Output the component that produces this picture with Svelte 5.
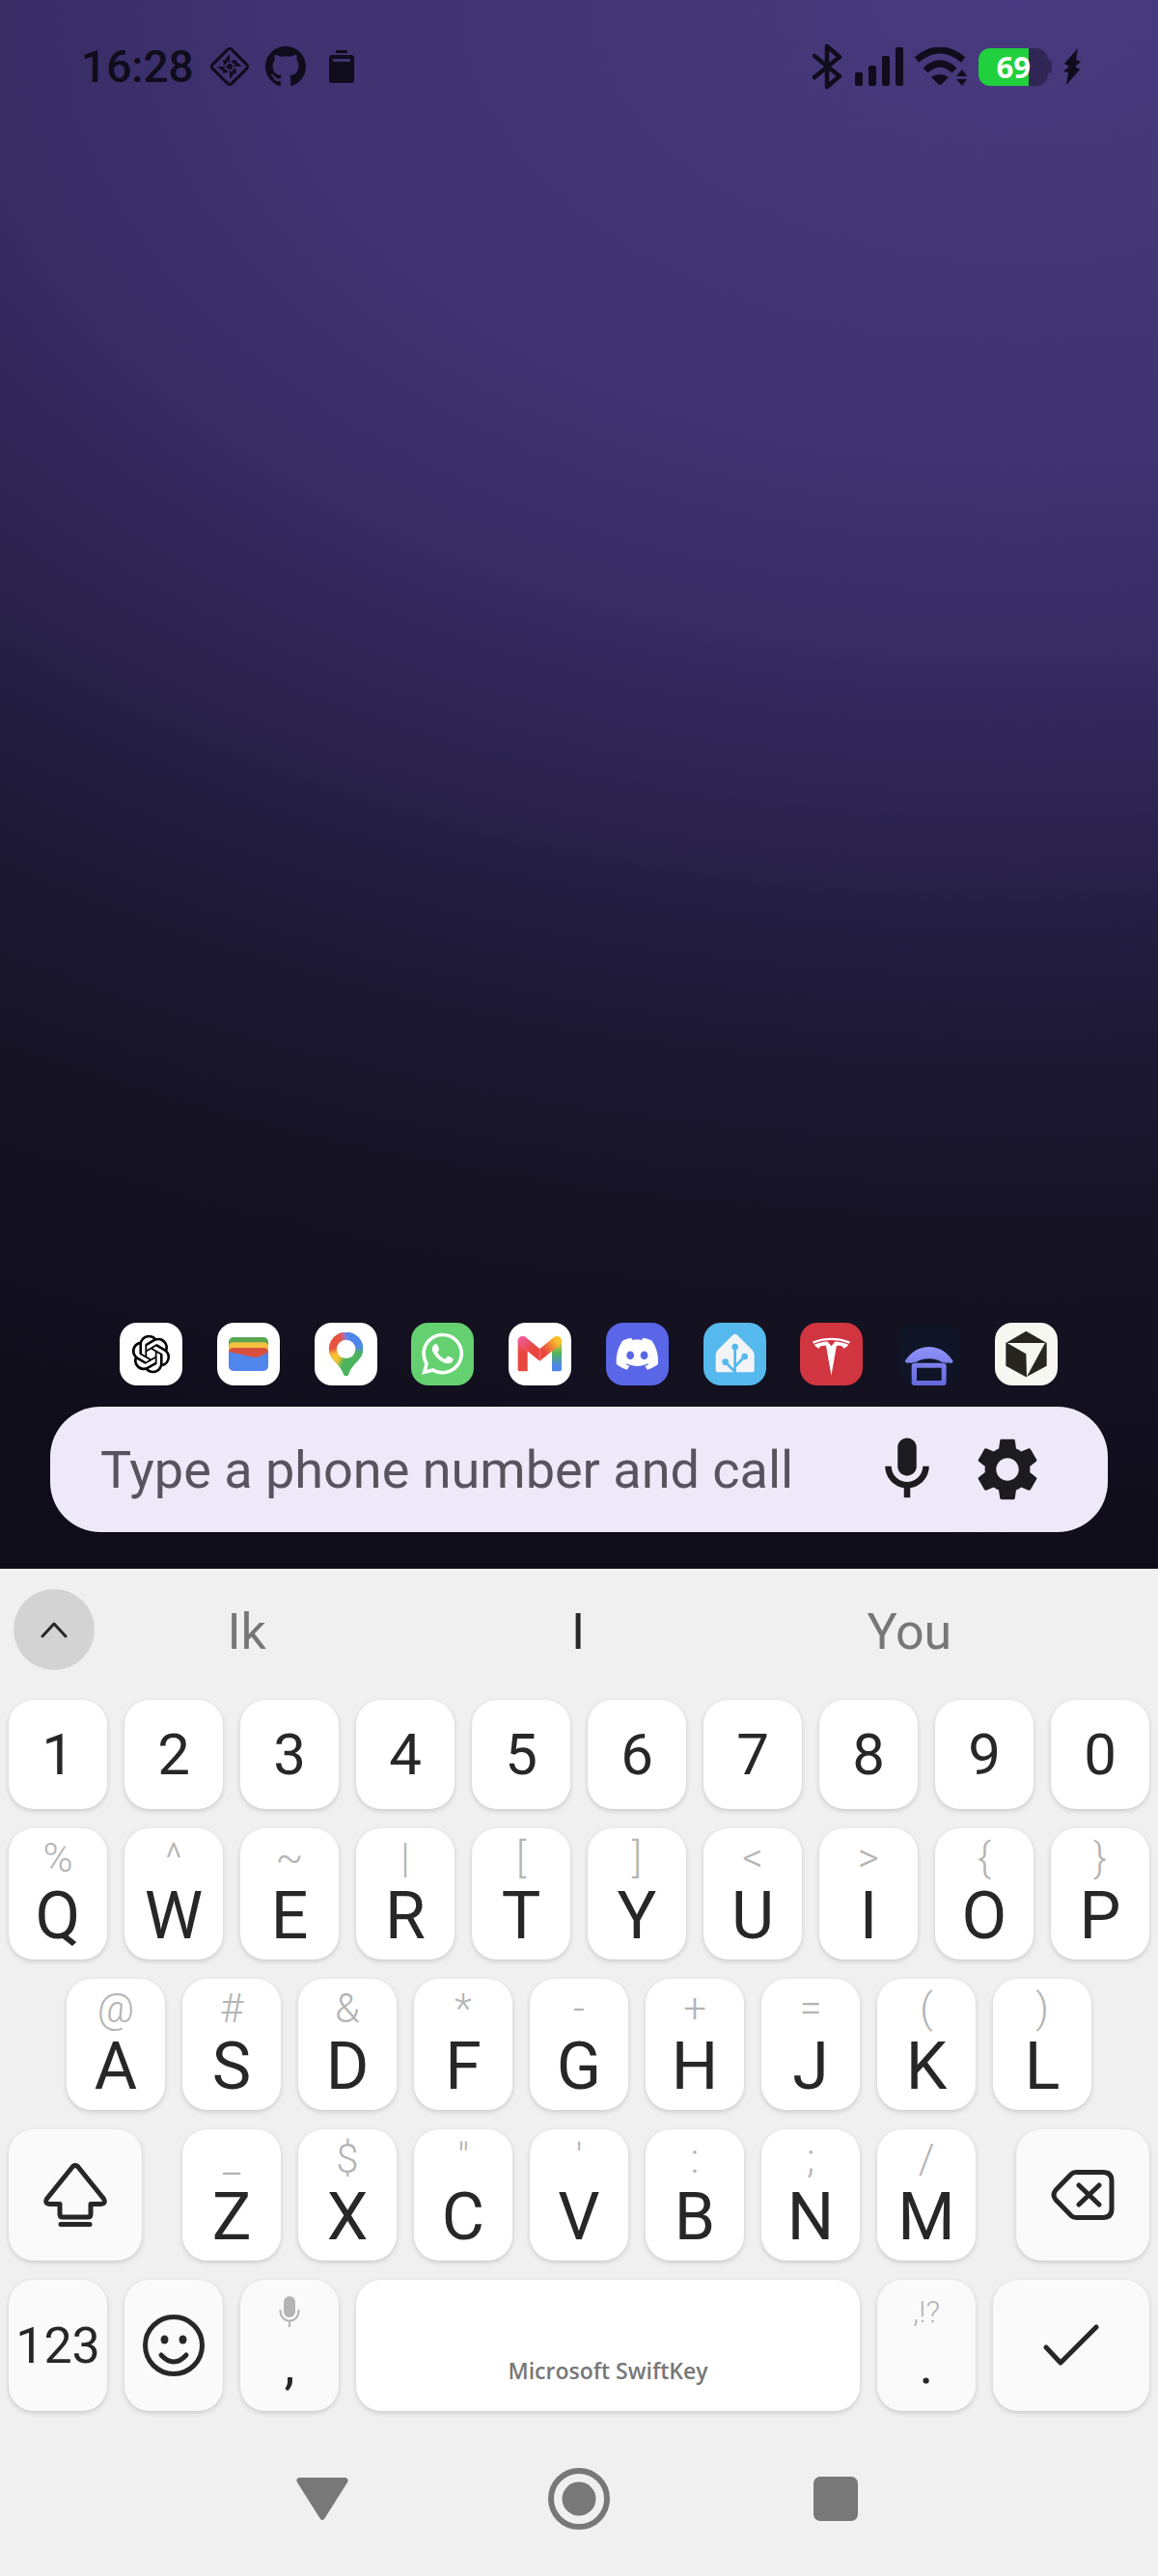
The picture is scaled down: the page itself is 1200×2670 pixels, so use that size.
<script lang="ts">
  type Key = { label: string; hint: string };

  const digits = '1234567890'.split('');

  function makeRow(letters: string, hints: string): Key[] {
    return letters.split('').map((label, i) => ({ label, hint: hints[i] }));
  }

  const topRow = makeRow('QWERTYUIOP', '%^~|[]<>{}');
  const homeRow = makeRow('ASDFGHJKL', '@#&*-+=()');
  const bottomRow = makeRow('ZXCVBNM', '_$"\':;/');

  const suggestions = ['Ik', 'I', 'You'];

  let query = $state('');

  function type(text: string) {
    query += text;
  }

  function backspace() {
    query = query.slice(0, -1);
  }
</script>

{#snippet letterKey(key: Key)}
  <button class="key" type="button" onclick={() => type(key.label)}>
    <span class="hint">{key.hint}</span>
    <span class="letter">{key.label}</span>
  </button>
{/snippet}

<div class="phone">
  <main class="home">
    <header class="status">
      <div class="status-left">
        <span class="time">16:28</span>
        <svg width="42" height="42" viewBox="0 0 42 42" aria-hidden="true">
          <rect x="7" y="7" width="28" height="28" rx="3" transform="rotate(45 21 21)" fill="none" stroke="currentColor" stroke-width="3" />
          <path d="M21 8l-5 6 5 3zM21 34l5-6-5-3zM8 21l6 5 3-5zM34 21l-6-5-3 5zM14 14l6 1-5 5zM28 28l-6-1 5-5zM28 14l-1 6-5-5zM14 28l1-6 5 5z" fill="currentColor" />
          <circle cx="21" cy="21" r="3" fill="currentColor" />
        </svg>
        <svg width="42" height="42" viewBox="0 0 16 16" aria-hidden="true">
          <path fill="currentColor" d="M8 0C3.58 0 0 3.58 0 8c0 3.54 2.29 6.53 5.47 7.59.4.07.55-.17.55-.38 0-.19-.01-.82-.01-1.49-2.01.37-2.53-.49-2.69-.94-.09-.23-.48-.94-.82-1.13-.28-.15-.68-.52-.01-.53.63-.01 1.08.58 1.23.82.72 1.21 1.87.87 2.33.66.07-.52.28-.87.51-1.07-1.78-.2-3.64-.89-3.64-3.95 0-.87.31-1.59.82-2.15-.08-.2-.36-1.02.08-2.12 0 0 .67-.21 2.2.82.64-.18 1.32-.27 2-.27.68 0 1.36.09 2 .27 1.53-1.04 2.2-.82 2.2-.82.44 1.1.16 1.92.08 2.12.51.56.82 1.27.82 2.15 0 3.07-1.87 3.75-3.65 3.95.29.25.54.73.54 1.48 0 1.07-.01 1.93-.01 2.2 0 .21.15.46.55.38A8.013 8.013 0 0016 8c0-4.42-3.58-8-8-8z" />
        </svg>
        <svg width="42" height="42" viewBox="0 0 42 42" aria-hidden="true">
          <rect x="15" y="4" width="12" height="3" rx="1" fill="currentColor" />
          <path fill="currentColor" fill-rule="evenodd" d="M11 9h20a3 3 0 0 1 3 3v23a3 3 0 0 1-3 3H11a3 3 0 0 1-3-3V12a3 3 0 0 1 3-3zm1 4v3h18v-3z" />
        </svg>
      </div>
      <div class="status-right">
        <svg width="32" height="48" viewBox="0 0 32 48" aria-hidden="true">
          <path d="M2 13l26 21-13 11V3l13 11L2 35" fill="none" stroke="currentColor" stroke-width="4.5" stroke-linejoin="round" stroke-linecap="round" />
        </svg>
        <svg width="50" height="40" viewBox="0 0 50 40" fill="currentColor" aria-hidden="true">
          <rect x="0" y="26" width="8" height="14" rx="2" />
          <rect x="14" y="19" width="8" height="21" rx="2" />
          <rect x="28" y="9" width="8" height="31" rx="2" />
          <rect x="42" y="0" width="8" height="40" rx="2" />
        </svg>
        <svg width="54" height="40" viewBox="0 0 54 40" aria-hidden="true">
          <path d="M2 13Q26-7 50 13" fill="none" stroke="currentColor" stroke-width="7" />
          <path d="M11 24Q26 10 41 24" fill="none" stroke="currentColor" stroke-width="7" />
          <path d="M17 31q9-6 18 0l-7 7q-2 2-4 0z" fill="currentColor" />
          <path d="M49 23l5 7H43zM49 40l5-7H43z" fill="currentColor" />
        </svg>
        <div class="battery" aria-label="Battery">
          <span class="battery-body">69</span>
          <span class="battery-tip"></span>
        </div>
        <svg width="18" height="38" viewBox="0 0 18 38" aria-hidden="true">
          <path d="M15 0L1 16l5 3-6 5 5 1-2 13L17 22l-5-3 6-5-5-2z" fill="currentColor" />
        </svg>
      </div>
    </header>

    <nav class="apps" aria-label="Apps">
      <button class="app" type="button" aria-label="ChatGPT">
        <svg viewBox="0 0 195 195">
          <path transform="translate(38 38) scale(4.95)" d="M22.2819 9.8211a5.9847 5.9847 0 0 0-.5157-4.9108 6.0462 6.0462 0 0 0-6.5098-2.9A6.0651 6.0651 0 0 0 4.9807 4.1818a5.9847 5.9847 0 0 0-3.9977 2.9 6.0462 6.0462 0 0 0 .7427 7.0966 5.98 5.98 0 0 0 .511 4.9107 6.051 6.051 0 0 0 6.5146 2.9001A5.9847 5.9847 0 0 0 13.2599 24a6.0557 6.0557 0 0 0 5.7718-4.2058 5.9894 5.9894 0 0 0 3.9977-2.9001 6.0557 6.0557 0 0 0-.7475-7.0729zm-9.022 12.6081a4.4755 4.4755 0 0 1-2.8764-1.0408l.1419-.0804 4.7783-2.7582a.7948.7948 0 0 0 .3927-.6813v-6.7369l2.02 1.1686a.071.071 0 0 1 .038.052v5.5826a4.504 4.504 0 0 1-4.4945 4.4944zm-9.6607-4.1254a4.4708 4.4708 0 0 1-.5346-3.0137l.142.0852 4.783 2.7582a.7712.7712 0 0 0 .7806 0l5.8428-3.3685v2.3324a.0804.0804 0 0 1-.0332.0615L9.74 19.9502a4.4992 4.4992 0 0 1-6.1408-1.6464zM2.3408 7.8956a4.485 4.485 0 0 1 2.3655-1.9728V11.6a.7664.7664 0 0 0 .3879.6765l5.8144 3.3543-2.0201 1.1685a.0757.0757 0 0 1-.071 0l-4.8303-2.7865A4.504 4.504 0 0 1 2.3408 7.872zm16.5963 3.8558L13.1038 8.364 15.1192 7.2a.0757.0757 0 0 1 .071 0l4.8303 2.7913a4.4944 4.4944 0 0 1-.6765 8.1042v-5.6772a.79.79 0 0 0-.407-.667zm2.0107-3.0231l-.142-.0852-4.7735-2.7818a.7759.7759 0 0 0-.7854 0L9.409 9.2297V6.8974a.0662.0662 0 0 1 .0284-.0615l4.8303-2.7866a4.4992 4.4992 0 0 1 6.6802 4.66zM8.3065 12.863l-2.02-1.1638a.0804.0804 0 0 1-.038-.0567V6.0742a4.4992 4.4992 0 0 1 7.3757-3.4537l-.142.0805L8.704 5.459a.7948.7948 0 0 0-.3927.6813zm1.0976-2.3654l2.602-1.4998 2.6069 1.4998v2.9994l-2.5974 1.4997-2.6067-1.4997Z" />
        </svg>
      </button>
      <button class="app" type="button" aria-label="Wallet">
        <svg viewBox="0 0 195 195">
          <defs>
            <clipPath id="wallet"><rect x="36" y="45" width="123" height="105" rx="15" /></clipPath>
          </defs>
          <g clip-path="url(#wallet)">
            <rect x="36" y="45" width="123" height="40" fill="#5aa651" />
            <path d="M36 76q0-15 15-15h93q15 0 15 15v30H36z" fill="#f6c13e" />
            <path d="M36 92q0-14 15-14h93q15 0 15 14v30H36z" fill="#d8503d" />
            <path d="M36 90l70 16q28 6 53-17v61H36z" fill="#5085ec" />
          </g>
        </svg>
      </button>
      <button class="app" type="button" aria-label="Maps">
        <svg viewBox="0 0 195 195">
          <defs>
            <clipPath id="pin">
              <path d="M98 29a53 53 0 0 1 53 53c0 34-32 42-44 76q-2 8-9 8t-9-8C77 124 45 116 45 82a53 53 0 0 1 53-53z" />
            </clipPath>
            <filter id="soften" x="-20%" y="-20%" width="140%" height="140%"><feGaussianBlur stdDeviation="7" /></filter>
          </defs>
          <g clip-path="url(#pin)">
            <rect x="30" y="20" width="140" height="160" fill="#4bb35e" />
            <g filter="url(#soften)">
              <path d="M98 82L20 60v80l48 6z" fill="#f9c22e" />
              <path d="M98 82L20 100V10h70z" fill="#e8513f" />
              <path d="M98 82L84 0h100v88z" fill="#4f86ec" />
            </g>
          </g>
          <circle cx="98" cy="82" r="29" fill="#fff" />
        </svg>
      </button>
      <button class="app whatsapp" type="button" aria-label="WhatsApp">
        <svg viewBox="0 0 195 195">
          <path fill="#fff" transform="translate(33 32) scale(5.4)" d="M17.472 14.382c-.297-.149-1.758-.867-2.03-.967-.273-.099-.471-.148-.67.15-.197.297-.767.966-.94 1.164-.173.199-.347.223-.644.075-.297-.15-1.255-.463-2.39-1.475-.883-.788-1.48-1.761-1.653-2.059-.173-.297-.018-.458.13-.606.134-.133.298-.347.446-.52.149-.174.198-.298.298-.497.099-.198.05-.371-.025-.52-.075-.149-.669-1.612-.916-2.207-.242-.579-.487-.5-.669-.51-.173-.008-.371-.01-.57-.01-.198 0-.52.074-.792.372-.272.297-1.04 1.016-1.04 2.479 0 1.462 1.065 2.875 1.213 3.074.149.198 2.096 3.2 5.077 4.487.709.306 1.262.489 1.694.625.712.227 1.36.195 1.871.118.571-.085 1.758-.719 2.006-1.413.248-.694.248-1.289.173-1.413-.074-.124-.272-.198-.57-.347m-5.421 7.403h-.004a9.87 9.87 0 01-5.031-1.378l-.361-.214-3.741.982.998-3.648-.235-.374a9.86 9.86 0 01-1.51-5.26c.001-5.45 4.436-9.884 9.888-9.884 2.64 0 5.122 1.03 6.988 2.898a9.825 9.825 0 012.893 6.994c-.003 5.45-4.437 9.884-9.885 9.884m8.413-18.297A11.815 11.815 0 0012.05 0C5.495 0 .16 5.335.157 11.892c0 2.096.547 4.142 1.588 5.945L.057 24l6.305-1.654a11.882 11.882 0 005.683 1.448h.005c6.554 0 11.89-5.335 11.893-11.893a11.821 11.821 0 00-3.48-8.413z" />
        </svg>
      </button>
      <button class="app" type="button" aria-label="Gmail">
        <svg viewBox="0 0 195 195">
          <defs>
            <linearGradient id="mailLeft" x1="0" y1="0" x2="0" y2="1">
              <stop offset="0.1" stop-color="#ee5a92" />
              <stop offset="0.45" stop-color="#e8473f" />
            </linearGradient>
            <linearGradient id="mailRight" x1="0" y1="0" x2="0" y2="1">
              <stop offset="0.15" stop-color="#f9c22e" />
              <stop offset="0.5" stop-color="#4bb35e" />
              <stop offset="0.85" stop-color="#4f86ec" />
            </linearGradient>
            <linearGradient id="mailFold" gradientUnits="userSpaceOnUse" x1="97" y1="98" x2="158" y2="50">
              <stop offset="0.2" stop-color="#e8473f" />
              <stop offset="0.9" stop-color="#f9c22e" />
            </linearGradient>
            <linearGradient id="mailFoldLeft" gradientUnits="userSpaceOnUse" x1="97" y1="98" x2="40" y2="50">
              <stop offset="0.4" stop-color="#e8473f" />
              <stop offset="1" stop-color="#ee5a92" />
            </linearGradient>
          </defs>
          <path d="M29 57a15 15 0 0 1 30 0v94H37q-8 0-8-8z" fill="url(#mailLeft)" />
          <path d="M165 57a15 15 0 0 0-30 0v94h22q8 0 8-8z" fill="url(#mailRight)" />
          <path d="M97 119L35 69a15 15 0 0 1 18-24l44 36z" fill="url(#mailFoldLeft)" />
          <path d="M97 119l62-50a15 15 0 0 0-18-24L97 81z" fill="url(#mailFold)" />
        </svg>
      </button>
      <button class="app discord" type="button" aria-label="Discord">
        <svg viewBox="0 0 195 195">
          <path fill="#fff" transform="translate(32 31.5) scale(5.42)" d="M20.317 4.3698a19.7913 19.7913 0 00-4.8851-1.5152.0741.0741 0 00-.0785.0371c-.211.3753-.4447.8648-.6083 1.2495-1.8447-.2762-3.68-.2762-5.4868 0-.1636-.3933-.4058-.8742-.6177-1.2495a.077.077 0 00-.0785-.037 19.7363 19.7363 0 00-4.8852 1.515.0699.0699 0 00-.0321.0277C.5334 9.0458-.319 13.5799.0992 18.0578a.0824.0824 0 00.0312.0561c2.0528 1.5076 4.0413 2.4228 5.9929 3.0294a.0777.0777 0 00.0842-.0276c.4616-.6304.8731-1.2952 1.226-1.9942a.076.076 0 00-.0416-.1057c-.6528-.2476-1.2743-.5495-1.8722-.8923a.077.077 0 01-.0076-.1277c.1258-.0943.2517-.1923.3718-.2914a.0743.0743 0 01.0776-.0105c3.9278 1.7933 8.18 1.7933 12.0614 0a.0739.0739 0 01.0785.0095c.1202.099.246.1981.3728.2924a.077.077 0 01-.0066.1276 12.2986 12.2986 0 01-1.873.8914.0766.0766 0 00-.0407.1067c.3604.698.7719 1.3628 1.225 1.9932a.076.076 0 00.0842.0286c1.961-.6067 3.9495-1.5219 6.0023-3.0294a.077.077 0 00.0313-.0552c.5004-5.177-.8382-9.6739-3.5485-13.6604a.061.061 0 00-.0312-.0286zM8.02 15.3312c-1.1825 0-2.1569-1.0857-2.1569-2.419 0-1.3332.9555-2.4189 2.157-2.4189 1.2108 0 2.1757 1.0952 2.1568 2.419 0 1.3332-.9555 2.4189-2.1569 2.4189zm7.9748 0c-1.1825 0-2.1569-1.0857-2.1569-2.419 0-1.3332.9554-2.4189 2.1569-2.4189 1.2108 0 2.1757 1.0952 2.1568 2.419 0 1.3332-.946 2.4189-2.1568 2.4189Z" />
        </svg>
      </button>
      <button class="app assistant" type="button" aria-label="Home Assistant">
        <svg viewBox="0 0 195 195">
          <path d="M91 38q7-6 14 0l46 46q7 7 7 15v47q0 8-8 8H46q-8 0-8-8V99q0-8 7-15z" fill="#f2f4f6" />
          <g stroke="#55b9ee" stroke-width="8" fill="none">
            <path d="M98 75v80M68 122l30 31M128 105L98 137" />
          </g>
          <g fill="#55b9ee">
            <circle cx="98" cy="75" r="10" />
            <circle cx="68" cy="122" r="10" />
            <circle cx="128" cy="105" r="10" />
          </g>
        </svg>
      </button>
      <button class="app tesla" type="button" aria-label="Tesla">
        <svg viewBox="0 0 195 195">
          <path fill="#fff" transform="translate(39 47) scale(4.87)" d="M12 5.362l2.475-3.026s4.245.09 8.471 2.054c-1.082 1.636-3.231 2.438-3.231 2.438-.146-1.439-1.154-1.79-4.354-1.79L12 24 8.619 5.034c-3.18 0-4.188.354-4.335 1.792 0 0-2.146-.795-3.229-2.43C5.28 2.431 9.525 2.34 9.525 2.34L12 5.362l-.004.002H12v-.002zm0-3.899c3.415-.03 7.326.528 11.328 2.28.535-.968.672-1.395.672-1.395C19.625.612 15.528.015 12 0 8.472.015 4.375.61 0 2.349c0 0 .195.525.672 1.396C4.674 1.989 8.585 1.435 12 1.46v.003z" />
        </svg>
      </button>
      <button class="app dialer" type="button" aria-label="Phone">
        <svg viewBox="0 0 195 195">
          <defs>
            <linearGradient id="handset" gradientUnits="userSpaceOnUse" x1="0" y1="75" x2="0" y2="195">
              <stop offset="0" stop-color="#8f92f8" />
              <stop offset="1" stop-color="#6568dc" />
            </linearGradient>
          </defs>
          <g fill="url(#handset)">
            <path d="M24 118Q53 75 98 75t74 43q2 5-4 7l-5 1-5-2-6 2-6-3-6 1q-18-12-42-12t-42 12l-6-1-6 3-6-2-5 2-5-2q-6-2-4-6z" />
            <path fill-rule="evenodd" d="M54 125h88q10 0 10 10v50q0 10-10 10H54q-10 0-10-10v-50q0-10 10-10zm6 15v40h77v-40z" />
          </g>
        </svg>
      </button>
      <button class="app cursor" type="button" aria-label="Cursor">
        <svg viewBox="0 0 195 195">
          <path d="M97 26l64 37v71l-64 35-63-35V63z" fill="#26251e" />
          <path d="M38 63h118L99 168l-2-71z" fill="#f7f7f2" />
        </svg>
      </button>
    </nav>

    <form class="search" onsubmit={(e) => e.preventDefault()}>
      <input type="text" aria-label="Type a phone number and call" placeholder="Type a phone number and call" bind:value={query} />
      <button type="button" aria-label="Voice input">
        <svg width="78" height="78" viewBox="0 0 24 24" fill="currentColor">
          <path d="M12 14c1.66 0 3-1.34 3-3V5c0-1.66-1.34-3-3-3S9 3.34 9 5v6c0 1.66 1.34 3 3 3zm5-3c0 2.76-2.24 5-5 5s-5-2.24-5-5H5c0 3.53 2.61 6.43 6 6.92V21h2v-3.08c3.39-.49 6-3.39 6-6.92h-2z" />
        </svg>
      </button>
      <button type="button" aria-label="Settings">
        <svg width="78" height="78" viewBox="0 0 24 24" fill="currentColor">
          <path d="M19.14 12.94c.04-.3.06-.61.06-.94 0-.32-.02-.64-.07-.94l2.03-1.58c.18-.14.23-.41.12-.61l-1.92-3.32c-.12-.22-.37-.29-.59-.22l-2.39.96c-.5-.38-1.03-.7-1.62-.94l-.36-2.54c-.04-.24-.24-.41-.48-.41h-3.84c-.24 0-.43.17-.47.41l-.36 2.54c-.59.24-1.13.57-1.62.94l-2.39-.96c-.22-.08-.47 0-.59.22L2.74 8.87c-.12.21-.08.47.12.61l2.03 1.58c-.05.3-.09.63-.09.94s.02.64.07.94l-2.03 1.58c-.18.14-.23.41-.12.61l1.92 3.32c.12.22.37.29.59.22l2.39-.96c.5.38 1.03.7 1.62.94l.36 2.54c.05.24.24.41.48.41h3.84c.24 0 .44-.17.47-.41l.36-2.54c.59-.24 1.13-.56 1.62-.94l2.39.96c.22.08.47 0 .59-.22l1.92-3.32c.12-.22.07-.47-.12-.61l-2.01-1.58zM12 15.6c-1.98 0-3.6-1.62-3.6-3.6s1.62-3.6 3.6-3.6 3.6 1.62 3.6 3.6-1.62 3.6-3.6 3.6z" />
        </svg>
      </button>
    </form>
  </main>

  <section class="keyboard" aria-label="Keyboard">
    <div class="suggestions">
      <button class="expand" type="button" aria-label="Show toolbar">
        <svg width="30" height="18" viewBox="0 0 30 18">
          <path d="M3 16L15 3l12 13" fill="none" stroke="currentColor" stroke-width="3" stroke-linecap="round" stroke-linejoin="round" />
        </svg>
      </button>
      {#each suggestions as word, i}
        <button class="word" class:primary={i === 1} type="button" onclick={() => type(word)}>{word}</button>
      {/each}
    </div>

    <div class="rows">
      <div class="row">
        {#each digits as digit}
          <button class="key digit" type="button" onclick={() => type(digit)}>{digit}</button>
        {/each}
      </div>
      <div class="row">
        {#each topRow as key}
          {@render letterKey(key)}
        {/each}
      </div>
      <div class="row">
        {#each homeRow as key}
          {@render letterKey(key)}
        {/each}
      </div>
      <div class="row spread">
        <button class="key action wide" type="button" aria-label="Shift">
          <svg width="66" height="66" viewBox="0 0 66 66" fill="none" stroke="currentColor" stroke-width="5" stroke-linejoin="round" stroke-linecap="round">
            <path d="M30.5 3.5q2.5-2 5 0L62.5 37q2.5 5-3 5.5H49V53q0 3-3 3H20q-3 0-3-3V42.5H6.5q-5.5-.5-3-5.5z" />
            <path d="M18 63.5h30" />
          </svg>
        </button>
        <div class="letters">
          {#each bottomRow as key}
            {@render letterKey(key)}
          {/each}
        </div>
        <button class="key action wide" type="button" aria-label="Backspace" onclick={backspace}>
          <svg width="66" height="52" viewBox="0 0 66 52" fill="none" stroke="currentColor" stroke-width="5" stroke-linejoin="round" stroke-linecap="round">
            <path d="M26 2.5h28q9 0 9 9v29q0 9-9 9H26q-3 0-5-2L5 31q-4-5 0-10L21 4.500q2-2 5-2z" />
            <path d="M29 16l21 20M50 16L29 36" />
          </svg>
        </button>
      </div>
      <div class="row">
        <button class="key action symbols" type="button">123</button>
        <button class="key action" type="button" aria-label="Emoji">
          <svg width="66" height="66" viewBox="0 0 66 66" fill="none" stroke="currentColor" stroke-width="5" stroke-linecap="round">
            <circle cx="33" cy="33" r="29.5" />
            <path d="M20 43q13 14 26 0" />
            <ellipse cx="23.5" cy="27" rx="4" ry="4.5" fill="currentColor" stroke="none" />
            <ellipse cx="42.5" cy="27" rx="4" ry="4.5" fill="currentColor" stroke="none" />
          </svg>
        </button>
        <button class="key action punct" type="button" aria-label="Comma" onclick={() => type(',')}>
          <span class="hint">
            <svg width="22" height="34" viewBox="0 0 22 34">
              <rect x="5" y="1" width="12" height="22" rx="6" fill="currentColor" />
              <path d="M1.5 15v2a9.5 9.5 0 0 0 19 0v-2M11 27v6" fill="none" stroke="currentColor" stroke-width="2" />
            </svg>
          </span>
          <span class="letter">,</span>
        </button>
        <button class="key space" type="button" onclick={() => type(' ')}>Microsoft SwiftKey</button>
        <button class="key action punct" type="button" onclick={() => type('.')}>
          <span class="hint">,!?</span>
          <span class="letter">.</span>
        </button>
        <button class="key action enter" type="button" aria-label="Done">
          <svg width="58" height="44" viewBox="0 0 58 44">
            <path d="M3 24l15 16L55 3" fill="none" stroke="currentColor" stroke-width="5" stroke-linecap="round" stroke-linejoin="round" />
          </svg>
        </button>
      </div>
    </div>

    <nav class="system" aria-label="System navigation">
      <button type="button" aria-label="Back">
        <svg width="54" height="46" viewBox="0 0 54 46">
          <path d="M3 1h48q4 1 2 5L29 44q-2 2-4 0L1 6Q-1 2 3 1z" fill="currentColor" />
        </svg>
      </button>
      <button type="button" aria-label="Home">
        <svg width="64" height="64" viewBox="0 0 64 64">
          <circle cx="32" cy="32" r="29" fill="none" stroke="currentColor" stroke-width="6" />
          <circle cx="32" cy="32" r="17.5" fill="currentColor" />
        </svg>
      </button>
      <button type="button" aria-label="Recent apps">
        <svg width="46" height="46" viewBox="0 0 46 46">
          <rect width="46" height="46" rx="7" fill="currentColor" />
        </svg>
      </button>
    </nav>
  </section>
</div>

<style>
  :global(body) {
    margin: 0;
    background: #f0f0f0;
  }

  .phone {
    display: flex;
    flex-direction: column;
    min-height: 100vh;
    font-family: Roboto, 'Liberation Sans', sans-serif;
  }

  button,
  input {
    margin: 0;
    padding: 0;
    border: none;
    background: none;
    font: inherit;
    color: inherit;
  }

  button {
    cursor: pointer;
  }

  svg {
    display: block;
    flex-shrink: 0;
  }

  /* home screen */
  .home {
    flex: 1;
    display: flex;
    flex-direction: column;
    padding-bottom: 38px;
    background: radial-gradient(
      ellipse 220% 100% at 88% 0%,
      #46397f 0%,
      #443877 12%,
      #3e3270 30%,
      #372c64 41%,
      #2d2452 51%,
      #231d40 60%,
      #1b1730 69%,
      #161324 79%,
      #13101f 89%,
      #0f0d1a 100%
    );
  }

  .status {
    display: flex;
    justify-content: space-between;
    align-items: center;
    padding: 42px 80px 0 84px;
    color: #0f0c1c;
  }

  .status-left {
    display: flex;
    align-items: center;
    gap: 16px;
  }

  .status-right {
    display: flex;
    align-items: center;
    gap: 12px;
  }

  .time {
    font-size: 46px;
    line-height: 54px;
    font-weight: 500;
  }

  .battery {
    display: flex;
    align-items: center;
  }

  .battery-body {
    box-sizing: border-box;
    width: 72px;
    padding-right: 18px;
    border-radius: 12px;
    background: linear-gradient(90deg, #20d03c 52px, #2f2655 52px);
    color: #fff;
    font-family: 'Open Sans', 'Noto Sans', sans-serif;
    font-size: 31px;
    font-weight: 700;
    line-height: 39px;
    text-align: right;
  }

  .battery-tip {
    width: 4px;
    height: 14px;
    border-radius: 0 4px 4px 0;
    background: #2f2655;
  }

  .apps {
    display: flex;
    justify-content: space-between;
    margin-top: auto;
    padding: 0 104px 22px 124px;
  }

  .app {
    width: 65px;
    height: 65px;
    border-radius: 18px;
    background: #fff;
    overflow: hidden;
  }

  .app svg {
    width: 100%;
    height: 100%;
  }

  .whatsapp {
    background: #64d070;
  }

  .discord {
    background: #5966e8;
  }

  .assistant {
    background: #55b9ee;
  }

  .tesla {
    background: #d03540;
  }

  .dialer {
    background: #0f1526;
  }

  .cursor {
    background: #f7f7f2;
  }

  .search {
    display: flex;
    align-items: center;
    height: 130px;
    margin: 0 52px;
    padding: 0 52px;
    border-radius: 52px;
    background: #eee9f8;
    color: #1c1b20;
  }

  .search input {
    flex: 1;
    min-width: 0;
    height: 100%;
    outline: none;
    font-size: 54px;
  }

  .search input::placeholder {
    color: #57545f;
    opacity: 1;
  }

  .search button {
    display: flex;
    justify-content: center;
    width: 104px;
  }

  /* keyboard */
  .keyboard {
    background: #f0f0f0;
    color: #272727;
  }

  .suggestions {
    display: grid;
    grid-template-columns: 84px 1fr 1fr 1fr;
    align-items: center;
    height: 126px;
    padding: 0 86px 10px 0;
  }

  .expand {
    display: flex;
    align-items: center;
    justify-content: center;
    width: 84px;
    height: 84px;
    margin-left: 14px;
    border-radius: 50%;
    background: #d3d3d3;
  }

  .word {
    padding-top: 6px;
    font-size: 52px;
    line-height: 60px;
    color: #777;
  }

  .word.primary {
    color: #272727;
  }

  .rows {
    display: flex;
    flex-direction: column;
    gap: 20px;
  }

  .row {
    display: flex;
    justify-content: center;
  }

  .spread {
    justify-content: space-between;
  }

  .letters {
    display: flex;
    width: 70%;
  }

  .key {
    display: flex;
    flex-direction: column;
    align-items: center;
    box-sizing: border-box;
    width: calc(10% - 18px);
    height: 136px;
    margin: 0 9px;
    padding-top: 6px;
    border-radius: 26px;
    background: #fff;
    box-shadow: 0 2px 5px rgba(0, 0, 0, 0.16);
  }

  .letters .key {
    flex: 1;
  }

  .hint {
    display: flex;
    align-items: center;
    height: 50px;
    font-size: 42px;
    font-weight: 300;
    line-height: 50px;
    color: #b4b4b4;
  }

  .letter {
    font-size: 68px;
    line-height: 70px;
  }

  .key.digit {
    justify-content: center;
    height: 113px;
    padding: 0;
    font-size: 60px;
    line-height: 70px;
  }

  .key.action {
    justify-content: center;
    padding: 0;
    background: #fafafa;
  }

  .key.wide {
    width: calc(13% - 18px);
  }

  .key.symbols {
    font-size: 52px;
  }

  .key.punct {
    justify-content: flex-start;
    padding-top: 8px;
  }

  .punct .hint {
    font-size: 32px;
  }

  .punct .letter {
    font-size: 56px;
    line-height: 60px;
  }

  .key.space {
    justify-content: flex-end;
    width: calc(45% - 18px);
    padding-bottom: 25px;
    font-family: 'Open Sans', 'Noto Sans', sans-serif;
    font-size: 23px;
    font-weight: 600;
    line-height: 34px;
    color: #777;
  }

  .key.enter {
    width: calc(15% - 18px);
  }

  .system {
    display: flex;
    justify-content: center;
    align-items: center;
    height: 161px;
    padding-top: 10px;
    color: #787878;
  }

  .system button {
    display: flex;
    justify-content: center;
    width: 266px;
  }
</style>
